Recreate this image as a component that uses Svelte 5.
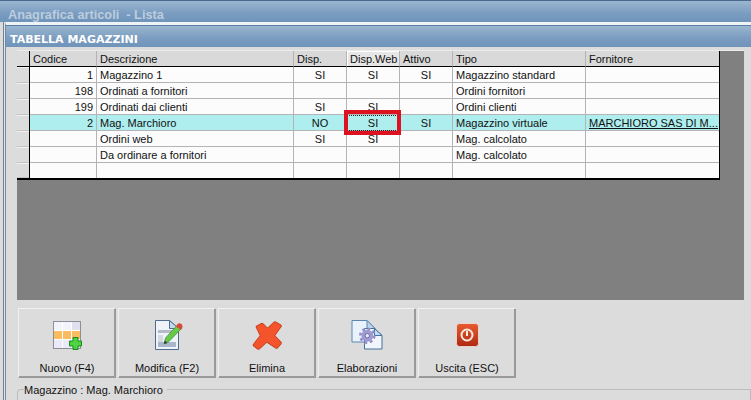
<script>
  const cols = ['Codice','Descrizione','Disp.','Disp.Web','Attivo','Tipo','Fornitore'];
  const rows = [
    ['1','Magazzino 1','SI','SI','SI','Magazzino standard',''],
    ['198','Ordinati a fornitori','','','','Ordini fornitori',''],
    ['199','Ordinati dai clienti','SI','SI','','Ordini clienti',''],
    ['2','Mag. Marchioro','NO','SI','SI','Magazzino virtuale','MARCHIORO SAS DI M...'],
    ['','Ordini web','SI','SI','','Mag. calcolato',''],
    ['','Da ordinare a fornitori','','','','Mag. calcolato',''],
    ['','','','','','','']
  ];
  const align = ['r','l','c','c','c','l','l'];
  const buttons = ['Nuovo (F4)','Modifica (F2)','Elimina','Elaborazioni','Uscita (ESC)'];
  const xShape = 'M6.500 7L11 4.500 16.500 10 24 3 29 6 22 15.700 29 23 25.500 27 15.700 20.500 7.500 28 3.500 25 10.700 15.700z';
</script>

<div class="window">
  <div class="outer-title">Anagrafica articoli&nbsp; - Lista</div>
  <div class="inner">
    <div class="inner-title">TABELLA MAGAZZINI</div>
    <div class="body">
      <div class="gridwrap">
        <div class="grid">
          <div class="row head">
            <div class="ind"></div>
            {#each cols as c, i}
              <div class="cell h" class:active={i === 3}>{c}</div>
            {/each}
          </div>
          {#each rows as r, ri}
            <div class="row" class:sel={ri === 3} class:last={ri === 6}>
              <div class="ind"></div>
              {#each r as v, i}
                <div class="cell {align[i]}" class:link={i === 6 && v} class:focus={ri === 3 && i === 3}>{v}</div>
              {/each}
            </div>
          {/each}
        </div>
        <div class="redbox"></div>
      </div>
      <div class="toolbar">
        {#each buttons as b, i}
          <div class="btn">
            <div class="ico">
              {#if i === 0}
                <svg width="32" height="32" viewBox="0 0 32 32">
                  <rect x="2.500" y="1.500" width="27" height="27" fill="#f3f3fb"/>
                  <rect x="20.500" y="1.500" width="9" height="9" fill="#dfe0f0"/>
                  <rect x="2.500" y="10.500" width="27" height="9" fill="#fbbb60"/>
                  <rect x="2.500" y="19.500" width="27" height="9" fill="#e9e9f8"/>
                  <path d="M11.500 2v26M20.500 2v26M3 10.500h26M3 19.500h26" stroke="#fff"/>
                  <rect x="2.500" y="1.500" width="27" height="27" fill="none" stroke="#8e8e96"/>
                  <path d="M22 17.500h5V21h3.500v5H27v3.500h-5V26h-3.500v-5H22z" fill="#4fd43f" stroke="#178a26"/>
                </svg>
              {:else if i === 1}
                <svg width="32" height="32" viewBox="0 0 32 32">
                  <path d="M4.500.5h14l9 8v21h-23z" fill="#eef3fa" stroke="#4d6c8e"/>
                  <path d="M18.500.5v8h9z" fill="#c4d8ee" stroke="#4d6c8e"/>
                  <rect x="7" y="10" width="17" height="3" fill="#b4bac6"/>
                  <rect x="7" y="15" width="5" height="11" fill="#d5d9e2"/>
                  <rect x="7" y="22" width="18" height="5" fill="#a9b6cc"/>
                  <path d="M13 24l1.500-6L26 5.500l4 3.500L18 21.500z" fill="#68c84a" stroke="#3b8a30" stroke-width=".7"/>
                  <path d="M13 24l.9-3.500 2.600 2.400z" fill="#3a3a3a"/>
                  <path d="M25 6.500l1.500-2.500c2-1.500 4.500-.5 5 2 .2 1-.5 2.500-1.500 4z" fill="#d8473a"/>
                </svg>
              {:else if i === 2}
                <svg width="32" height="32" viewBox="0 0 32 32">
                  <path d={xShape} fill="#bf3d1d" stroke="#bf3d1d" stroke-width="3.500" stroke-linejoin="round"/>
                  <path d={xShape} fill="#f4542c" stroke="#f4542c" stroke-width="2" stroke-linejoin="round"/>
                </svg>
              {:else if i === 3}
                <svg width="32" height="32" viewBox="0 0 32 32">
                  <path d="M1 .5h15l8 8v13.500H1z" fill="#eaf2fc" stroke="#5a86b4"/>
                  <path d="M16 .5v8h8z" fill="#bcd4ec" stroke="#5a86b4"/>
                  <path d="M13.500 8.500h10l7.500 7v13.500H13.500z" fill="#f0f6fc" stroke="#44709e"/>
                  <path d="M23.500 8.500v7H31z" fill="#c4daf0" stroke="#44709e"/>
                  <circle cx="16.300" cy="15.700" r="6" fill="#a09ad2"/>
                  <circle cx="16.300" cy="15.700" r="7" fill="none" stroke="#938dc8" stroke-width="2.500" stroke-dasharray="2.800 2.700"/>
                  <circle cx="16.300" cy="15.700" r="2.200" fill="#e8e8f6" stroke="#716ca8"/>
                </svg>
              {:else}
                <svg width="32" height="32" viewBox="0 0 32 32">
                  <defs><linearGradient id="ex" x1="0" y1="0" x2="0" y2="1"><stop offset="0" stop-color="#e85c30"/><stop offset="1" stop-color="#ae2a10"/></linearGradient></defs>
                  <rect x="5.500" y="3.500" width="22" height="23" rx="3" fill="url(#ex)" stroke="#efe4de" stroke-width=".8"/>
                  <circle cx="16" cy="15" r="5.500" fill="none" stroke="#fbe9e0" stroke-width="2"/>
                  <path d="M16 11v5" stroke="#fbe9e0" stroke-width="2"/>
                </svg>
              {/if}
            </div>
            <div class="lbl">{b}</div>
          </div>
        {/each}
      </div>
      <div class="group"><span>Magazzino : Mag. Marchioro</span></div>
    </div>
  </div>
</div>

<style>
  :global(body) { margin: 0; background: #dcdcdc; overflow: hidden; }
  .window {
    width: 751px; height: 400px; overflow: hidden; box-sizing: border-box;
    font: 11px "Liberation Sans", Arial, sans-serif; color: #111;
    background: #dcdcdc; border-top: 1px solid #4a6a8c;
  }
  .outer-title {
    height: 21px; padding-left: 8px; box-sizing: border-box;
    font: bold 12.75px/28px "Liberation Sans", Arial, sans-serif;
    color: #bccdde;
    background: linear-gradient(#9ab6d0, #7a9cc0 60%, #6f94ba);
  }
  .inner {
    margin: 0 0 0 5px; border-top: 3px solid #f0f3f6; border-left: 1px solid #7a8a9a;
    height: 376px; background: #dcdcdc; box-shadow: -1px 0 0 #dfe6ec, -2px 0 0 #6f8296;
  }
  .inner-title {
    height: 22px; padding-left: 4px; box-sizing: border-box; border-top: 1px solid #5b7fa6;
    font: bold 11px/27px "DejaVu Sans", sans-serif; color: #fff;
    background: linear-gradient(#9ab6d0, #7a9cc0 60%, #6f94ba);
    overflow: hidden;
  }
  .body { padding: 3px 7px 0 11px; }
  .gridwrap {
    position: relative; height: 250px; box-sizing: border-box;
    background: #808080; border-top: 1px solid #ececec;
  }
  .grid { border-right: 1px solid #000; border-bottom: 2px solid #000; box-sizing: content-box; background: #fcfcfc; width: 702px; }
  .row {
    display: grid; height: 16px;
    grid-template-columns: 13px 67px 197px 53px 53px 53px 133px 1fr;
  }
  .row.last { height: 15px; }
  .row.last .cell { border-bottom: 0; height: 15px; }
  .row.head { background: #d9d9d9; }
  .ind {
    background: #dcdcdc; border-right: 1px solid #000; box-sizing: content-box; width: 12px;
    box-shadow: inset 0 -1px 0 #c4c4c4, inset 0 1px 0 #f0f0f0;
  }
  .head .ind { box-shadow: inset 0 -1px 0 #000; }
  .cell {
    box-sizing: border-box; padding: 0 3px; line-height: 17px; white-space: nowrap; overflow: hidden;
    border-right: 1px solid #b4b4b4; border-bottom: 1px solid #b4b4b4; height: 16px;
  }
  .cell:last-child { border-right: 0; }
  .h { border-bottom: 1px solid #000; }
  .h.active { background: #e6e6e6; box-shadow: inset 1px 1px 0 #fff; }
  .r { text-align: right; }
  .c { text-align: center; }
  .sel { background: #aeeeee; }
  .link { text-decoration: underline; }
  .focus { outline: 1px dotted #222; outline-offset: -1px; }
  .redbox {
    position: absolute; left: 327px; top: 59px; width: 57px; height: 25px;
    box-sizing: border-box; border: 4px solid #dc1220;
  }
  .toolbar { display: flex; gap: 2px; margin: 8px 0 0 1px; }
  .btn {
    width: 98px; height: 70px; box-sizing: border-box; background: #dcdcdc;
    border: 1px solid #9a9a9a; border-top-color: #f0f0f0; border-left-color: #f0f0f0;
    box-shadow: inset -1px -1px 0 #9a9a9a;
    display: flex; flex-direction: column; align-items: center;
  }
  .ico { height: 32px; margin-top: 11px; }
  .ico svg { display: block; }
  .lbl { line-height: 16px; margin-top: 8px; }
  .group {
    margin-top: 11px; height: 20px; border: 1px solid #bcbcbc; border-bottom: 0;
    border-radius: 4px 0 0 0; padding-left: 6px; margin-right: -7px;
  }
  .group span { display: inline-block; background: #dcdcdc; position: relative; top: -7px; padding: 0 4px 0 0; line-height: 14px; }
</style>
